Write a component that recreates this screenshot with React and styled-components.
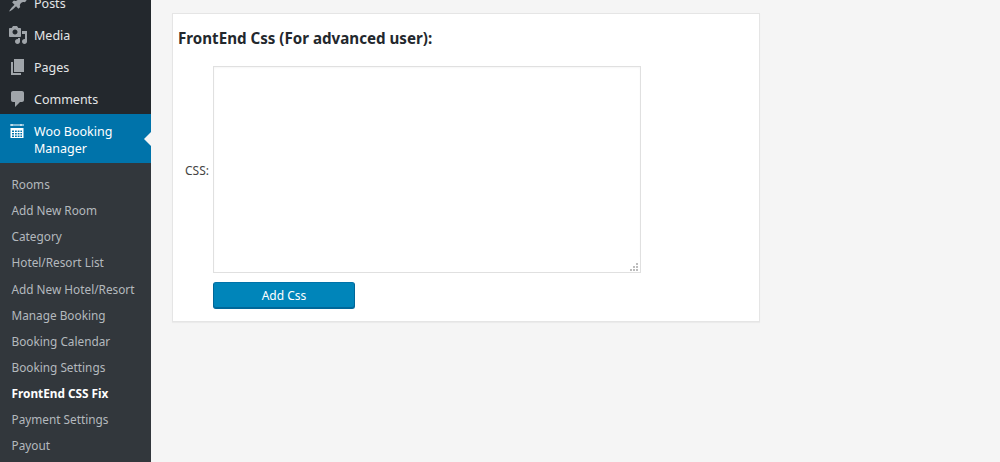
import React from "react";
import styled, { createGlobalStyle } from "styled-components";

const Global = createGlobalStyle`
  html, body { margin: 0; padding: 0; height: 100%; overflow: hidden; background: #f5f5f5; }
  body { font-family: "Noto Sans", "Open Sans", sans-serif; }
`;
const Page = styled.div`
  display: flex;
  width: 1000px;
  height: 462px;
  overflow: hidden;
  background: #f5f5f5;
`;
const Sidebar = styled.nav`
  width: 151px;
  flex: none;
  height: 462px;
  overflow: hidden;
  background: #23282d;
`;
const MainMenu = styled.div`
  margin-top: -13px;
`;
const MenuItem = styled.div`
  display: flex;
  height: 32px;
  align-items: center;
  color: #e4e6e7;
  font-size: 12.5px;
  padding-left: 8px;
`;
const IconSlot = styled.span`
  width: 26px;
  flex: none;
  display: flex;
  color: #a0a5aa;
`;
const ActiveItem = styled.div`
  position: relative;
  display: flex;
  height: 49px;
  margin-top: -1px;
  padding: 9px 0 0 9px;
  box-sizing: border-box;
  background: #0073aa;
  color: #fff;
  font-size: 12.5px;
  line-height: 17px;
`;
const ActiveIcon = styled(IconSlot)`
  width: 25px;
  color: #fff;
`;
const Arrow = styled.span`
  position: absolute;
  right: 0;
  top: 18px;
  border: 7px solid transparent;
  border-left-width: 0;
  border-right-color: #f5f5f5;
`;
const SubMenu = styled.div`
  background: #32373c;
  padding-top: 8px;
  height: 320px;
`;
const SubItem = styled.div`
  height: 26.15px;
  line-height: 27px;
  padding-left: 11.5px;
  font-size: 11.8px;
  color: ${p => (p.$current ? "#fff" : "#b4b9be")};
  font-weight: ${p => (p.$current ? 700 : 400)};
  white-space: nowrap;
`;
const Main = styled.main`
  flex: 1;
  padding: 13px 0 0 21px;
`;
const Card = styled.section`
  width: 588px;
  height: 309px;
  box-sizing: border-box;
  background: #fff;
  border: 1px solid #e5e5e5;
  box-shadow: 0 1px 1px rgba(0, 0, 0, 0.04);
  padding: 14px 0 0 5px;
`;
const Heading = styled.h2`
  margin: 0 0 18px;
  font-size: 15.15px;
  line-height: 20px;
  font-weight: 700;
  color: #23282d;
`;
const FormRow = styled.div`
  display: flex;
  align-items: center;
`;
const Label = styled.label`
  width: 31px;
  margin-right: 4px;
  padding-top: 2px;
  flex: none;
  text-align: right;
  font-size: 12px;
  color: #444;
`;
const TextArea = styled.textarea`
  display: block;
  width: 428px;
  height: 207px;
  box-sizing: border-box;
  margin: 0;
  border: 1px solid #e0e0e0;
  box-shadow: inset 0 1px 2px rgba(0, 0, 0, 0.04);
  background: #fff;
  outline: none;
  resize: vertical;
  &::-webkit-resizer {
    background-color: #fff;
    background-repeat: no-repeat;
    background-size: 2px 2px;
    background-image:
      linear-gradient(#bdbdbd, #bdbdbd), linear-gradient(#bdbdbd, #bdbdbd),
      linear-gradient(#bdbdbd, #bdbdbd), linear-gradient(#bdbdbd, #bdbdbd),
      linear-gradient(#bdbdbd, #bdbdbd), linear-gradient(#bdbdbd, #bdbdbd);
    background-position: 11px 6px, 8px 9px, 11px 9px, 5px 12px, 8px 12px, 11px 12px;
  }
`;
const ButtonRow = styled.div`
  padding: 9px 0 0 35px;
`;
const Button = styled.button`
  width: 142px;
  height: 27px;
  box-sizing: border-box;
  padding: 0;
  background: #0085ba;
  border: 1px solid #006799;
  border-top-color: #0073aa;
  border-radius: 3px;
  box-shadow: inset 0 -1px 0 #006799;
  color: #fff;
  font-family: inherit;
  font-size: 12px;
`;

const Pin = () => (
  <svg width="20" height="20" viewBox="0 0 20 20" fill="currentColor">
    <path d="M10.44 3.02l1.82-1.82 6.36 6.35-1.83 1.82c-1.05-.68-2.48-.57-3.41.36l-.75.75c-.92.93-1.04 2.35-.35 3.41l-1.83 1.82-2.41-2.41-2.8 2.79c-.42.42-3.38 2.71-3.8 2.29s1.86-3.39 2.28-3.81l2.79-2.79L4.1 9.36l1.83-1.82c1.05.69 2.48.57 3.4-.36l.75-.75c.93-.92 1.05-2.35.36-3.41z" />
  </svg>
);
const MediaIcon = () => (
  <svg width="20" height="20" viewBox="0 0 20 20" fill="currentColor">
    <path d="M13 11V4c0-.55-.45-1-1-1h-1.67L9 1H5L3.67 3H2c-.55 0-1 .45-1 1v7c0 .55.45 1 1 1h10c.55 0 1-.45 1-1zM7 4.5c1.38 0 2.5 1.12 2.5 2.5S8.38 9.500 7 9.500 4.500 8.380 4.500 7 5.620 4.500 7 4.500zM14 6h5v10.500c0 1.380-1.120 2.500-2.500 2.500S14 17.880 14 16.500s1.120-2.500 2.500-2.500c.17 0 .34.020.5.050V9h-3V6zm-4 8.050V13h2v3.500c0 1.380-1.120 2.500-2.500 2.500S7 17.880 7 16.500 8.120 14 9.500 14c.17 0 .34.020.5.050z" />
  </svg>
);
const PagesIcon = () => (
  <svg width="20" height="20" viewBox="0 0 20 20" fill="currentColor">
    <path d="M6 15V2h10v13H6zm-1 1h8v2H3V5h2v11z" />
  </svg>
);
const CommentIcon = () => (
  <svg width="20" height="20" viewBox="0 0 20 20" fill="currentColor">
    <path d="M5 2h9c1.100 0 2 .9 2 2v7c0 1.100-.9 2-2 2h-2l-5 5v-5H5c-1.100 0-2-.9-2-2V4c0-1.100.9-2 2-2z" />
  </svg>
);
const CalendarIcon = () => (
  <svg width="16" height="16" viewBox="0 0 16 16" fill="currentColor">
    <path d="M1 1.500h1.500V1h1v.5h8V1h1v.5H15v1h-2.500V3h-1v-.5h-8V3h-1v-.5H1z" />
    <path
      fillRule="evenodd"
      d="M1.500 5h13v10h-13zM3 7.500v1.500h2V7.500zm3 0v1.500h1.800V7.500zm2.700 0v1.500h1.800V7.500zm2.700 0v1.500h1.600V7.500zM3 10v1.500h2V10zm3 0v1.500h1.800V10zm2.700 0v1.500h1.800V10zm2.700 0v1.500h1.600V10zM3 12.500V14h2v-1.500zm3 0V14h1.800v-1.500zm2.700 0V14h1.800v-1.500zm2.700 0V14h1.600v-1.500z"
    />
  </svg>
);

const top = [
  ["Posts", <Pin />],
  ["Media", <MediaIcon />],
  ["Pages", <PagesIcon />],
  ["Comments", <CommentIcon />],
];
const subs = [
  "Rooms",
  "Add New Room",
  "Category",
  "Hotel/Resort List",
  "Add New Hotel/Resort",
  "Manage Booking",
  "Booking Calendar",
  "Booking Settings",
  "FrontEnd CSS Fix",
  "Payment Settings",
  "Payout",
];

export default function App() {
  return (
    <Page>
      <Global />
      <Sidebar>
        <MainMenu>
          {top.map(([name, icon]) => (
            <MenuItem key={name}>
              <IconSlot>{icon}</IconSlot>
              {name}
            </MenuItem>
          ))}
          <ActiveItem>
            <ActiveIcon>
              <CalendarIcon />
            </ActiveIcon>
            <span>
              Woo Booking
              <br />
              Manager
            </span>
            <Arrow />
          </ActiveItem>
          <SubMenu>
            {subs.map(s => (
              <SubItem key={s} $current={s === "FrontEnd CSS Fix"}>
                {s}
              </SubItem>
            ))}
          </SubMenu>
        </MainMenu>
      </Sidebar>
      <Main>
        <Card>
          <Heading>FrontEnd Css (For advanced user):</Heading>
          <FormRow>
            <Label>CSS:</Label>
            <TextArea />
          </FormRow>
          <ButtonRow>
            <Button>Add Css</Button>
          </ButtonRow>
        </Card>
      </Main>
    </Page>
  );
}
